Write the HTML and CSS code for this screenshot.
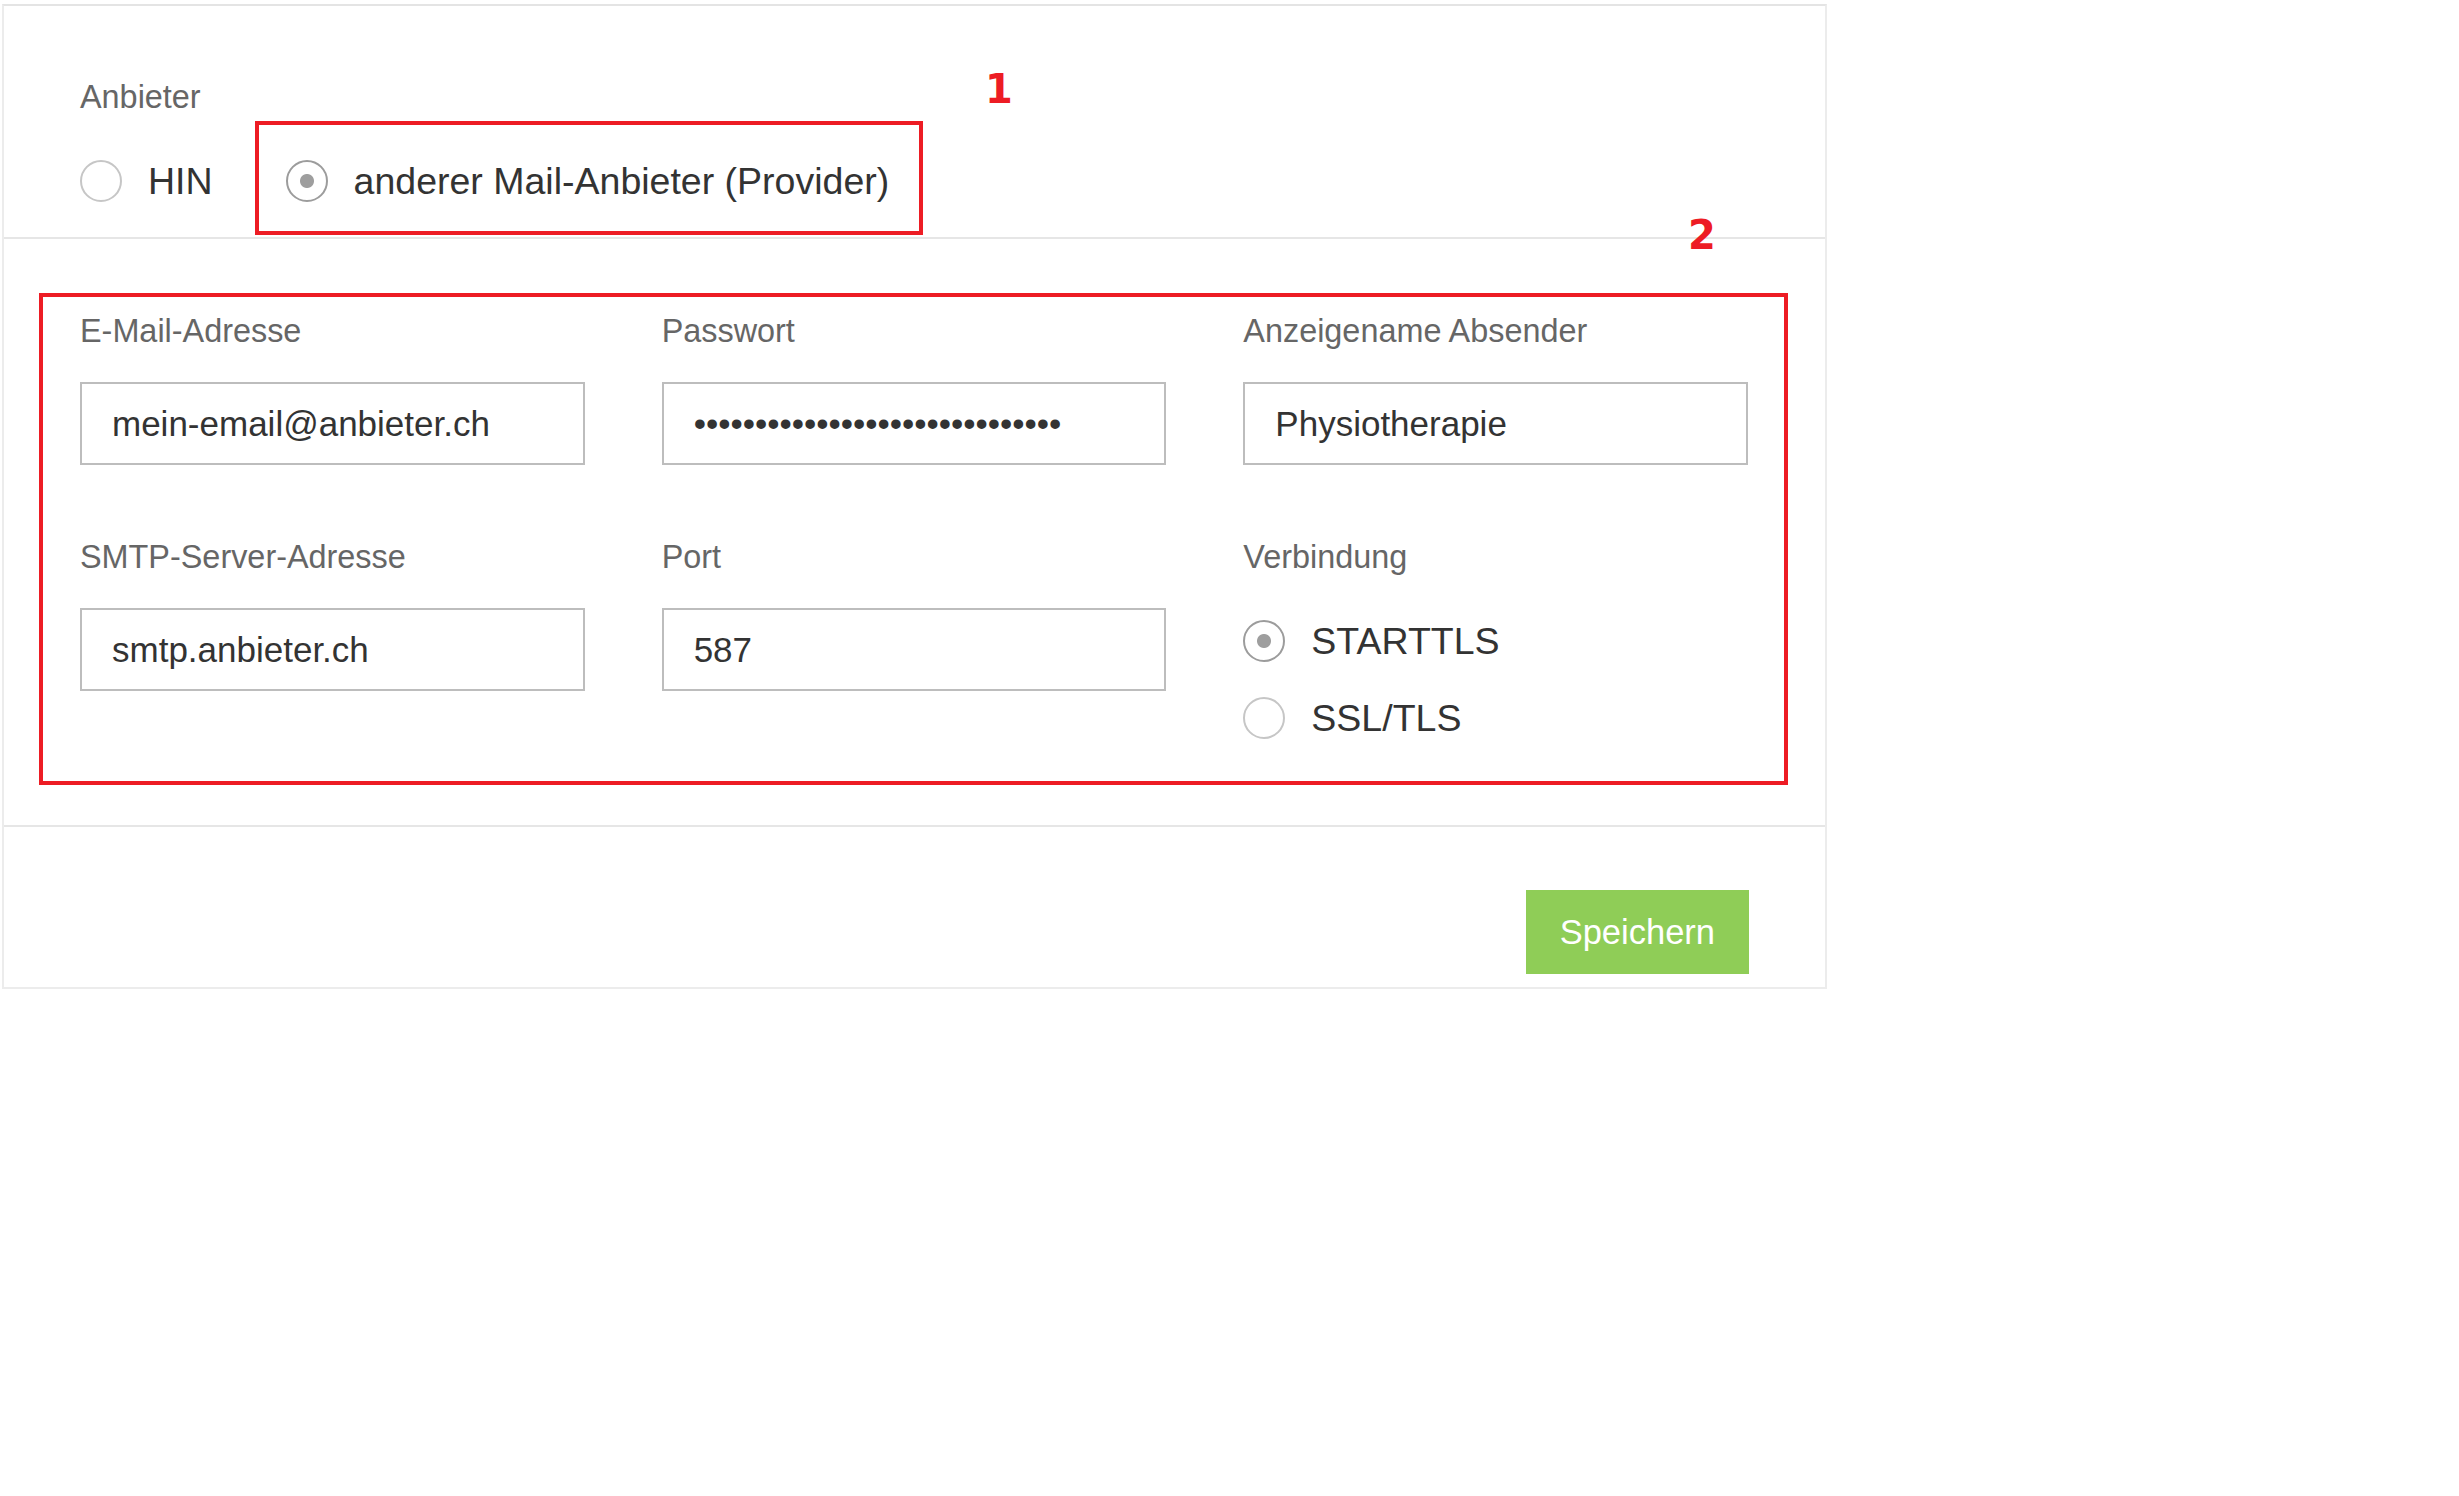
FILE: index.html
```html
<!DOCTYPE html>
<html lang="de">
<head>
    <meta charset="UTF-8">
    <meta name="viewport" content="width=device-width, initial-scale=1.0">
    <title>E-Mail Einstellungen</title>
    <link rel="stylesheet" href="styles.css">
</head>
<body>
    <div class="panel">
        <section class="panel-section provider-section">
            <label class="field-label">Anbieter</label>
            <div class="radio-row">
                <label class="radio">
                    <input type="radio" name="provider" value="hin">
                    <span>HIN</span>
                </label>
                <label class="radio">
                    <input type="radio" name="provider" value="other" checked>
                    <span>anderer Mail-Anbieter (Provider)</span>
                </label>
            </div>
        </section>

        <section class="panel-section smtp-section">
            <div class="field-grid">
                <div class="field">
                    <label class="field-label" for="email">E-Mail-Adresse</label>
                    <input class="text-input" id="email" type="text" value="mein-email@anbieter.ch">
                </div>
                <div class="field">
                    <label class="field-label" for="password">Passwort</label>
                    <input class="text-input" id="password" type="password" value="geheimespasswort1234567890abcd">
                </div>
                <div class="field">
                    <label class="field-label" for="sender">Anzeigename Absender</label>
                    <input class="text-input" id="sender" type="text" value="Physiotherapie">
                </div>
                <div class="field">
                    <label class="field-label" for="server">SMTP-Server-Adresse</label>
                    <input class="text-input" id="server" type="text" value="smtp.anbieter.ch">
                </div>
                <div class="field">
                    <label class="field-label" for="port">Port</label>
                    <input class="text-input" id="port" type="text" value="587">
                </div>
                <div class="field">
                    <label class="field-label">Verbindung</label>
                    <div class="radio-stack">
                        <label class="radio">
                            <input type="radio" name="security" value="starttls" checked>
                            <span>STARTTLS</span>
                        </label>
                        <label class="radio">
                            <input type="radio" name="security" value="ssl">
                            <span>SSL/TLS</span>
                        </label>
                    </div>
                </div>
            </div>
        </section>

        <div class="panel-footer">
            <button class="btn-save" type="button">Speichern</button>
        </div>

        <!-- annotation markers -->
        <div class="mark mark-1"></div>
        <span class="mark-num num-1">1</span>
        <div class="mark mark-2"></div>
        <span class="mark-num num-2">2</span>
    </div>
</body>
</html>
```

FILE: styles.css
```css
* {
    margin: 0;
    padding: 0;
    box-sizing: border-box;
}

body {
    font-family: 'Liberation Sans', Arial, sans-serif;
    color: #333;
    background: #fff;
}

.panel {
    position: relative;
    width: 1825px;
    margin: 4px 0 0 2px;
    border: 2px solid #ececec;
    border-top-color: #e4e4e4;
    background: #fff;
}

.panel-section {
    border-bottom: 2px solid #e6e6e6;
}

.provider-section {
    padding: 69px 77px 30px 76px;
}

.smtp-section {
    padding: 70px 77px 81px 76px;
}

.field-label {
    display: block;
    font-size: 32.4px;
    line-height: 45px;
    color: #666;
}

/* radios */
.radio-row {
    display: flex;
    gap: 73px;
    margin-top: 35px;
}

.radio-stack {
    display: flex;
    flex-direction: column;
    gap: 25px;
    margin-top: 35px;
}

.radio {
    display: flex;
    align-items: center;
    gap: 26px;
    font-size: 37.5px;
    line-height: 52px;
    color: #333;
    cursor: pointer;
}

.radio input {
    appearance: none;
    -webkit-appearance: none;
    flex: none;
    width: 42px;
    height: 42px;
    margin: 0;
    border: 2px solid #c6c6c6;
    border-radius: 50%;
    background: #fff;
}

.radio input:checked {
    border-color: #9c9c9c;
    background: radial-gradient(circle, #9e9e9e 0 6.5px, #fff 7.5px);
}

/* text fields */
.field-grid {
    display: grid;
    grid-template-columns: repeat(3, 1fr);
    column-gap: 77px;
    row-gap: 70px;
}

.text-input {
    display: block;
    width: 100%;
    height: 83px;
    margin-top: 28px;
    padding: 0 30px;
    border: 2px solid #bdbdbd;
    border-radius: 0;
    font-family: inherit;
    font-size: 35px;
    color: #333;
    background: #fff;
    outline: none;
}

.panel-footer {
    display: flex;
    justify-content: flex-end;
    padding: 63px 76px 13px;
}

.btn-save {
    height: 84px;
    padding: 0 34px;
    border: none;
    background: #8fcd57;
    color: #fff;
    font-family: inherit;
    font-size: 34.5px;
    cursor: pointer;
}

/* red annotation overlay */
.mark {
    position: absolute;
    border: 4px solid #ed1c24;
    pointer-events: none;
}

.mark-1 {
    left: 251px;
    top: 115px;
    width: 668px;
    height: 114px;
}

.mark-2 {
    left: 35px;
    top: 287px;
    width: 1749px;
    height: 492px;
}

.mark-num {
    position: absolute;
    font-family: 'DejaVu Sans', sans-serif;
    font-weight: bold;
    font-size: 40px;
    line-height: 40px;
    color: #ed1c24;
}

.num-1 {
    left: 981px;
    top: 63px;
}

.num-2 {
    left: 1684px;
    top: 209px;
}
```
